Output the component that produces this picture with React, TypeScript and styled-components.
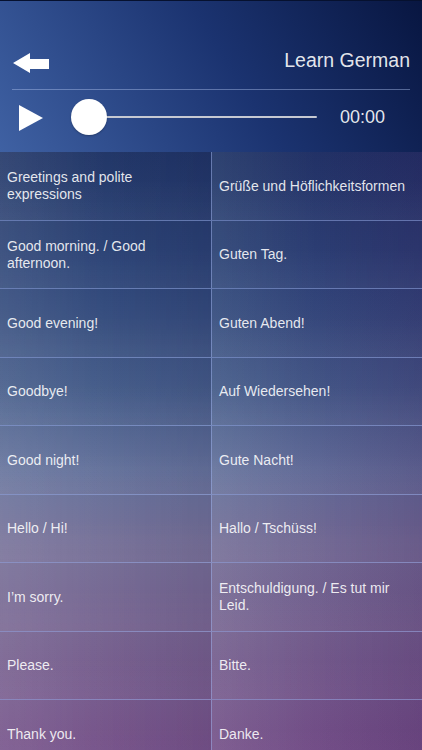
import React from 'react';
import styled, { createGlobalStyle } from 'styled-components';

const GlobalStyle = createGlobalStyle`
  html, body {
    margin: 0;
    padding: 0;
    background: #0b1a44;
    overflow: hidden;
  }
  * {
    box-sizing: border-box;
  }
`;

const phrases: [string, string][] = [
  ['Greetings and polite expressions', 'Grüße und Höflichkeitsformen'],
  ['Good morning. / Good afternoon.', 'Guten Tag.'],
  ['Good evening!', 'Guten Abend!'],
  ['Goodbye!', 'Auf Wiedersehen!'],
  ['Good night!', 'Gute Nacht!'],
  ['Hello / Hi!', 'Hallo / Tschüss!'],
  ['I’m sorry.', 'Entschuldigung. / Es tut mir Leid.'],
  ['Please.', 'Bitte.'],
  ['Thank you.', 'Danke.'],
];

function App(): React.ReactElement {
  return (
    <>
      <GlobalStyle />
      <Screen>
        <Header>
          <TopRow>
            <BackButton aria-label="back">
              <svg width="36" height="20" viewBox="0 0 36 20">
                <path d="M0 10 L17 0 L17 6 L36 6 L36 16 L17 16 L17 20 Z" fill="#fff" />
              </svg>
            </BackButton>
            <Title>Learn German</Title>
          </TopRow>
          <Divider />
          <ControlRow>
            <PlayButton aria-label="play">
              <svg width="24" height="26" viewBox="0 0 24 26">
                <path d="M0 0 L24 13 L0 26 Z" fill="#fff" />
              </svg>
            </PlayButton>
            <Slider>
              <Track />
              <Thumb />
            </Slider>
            <Time>00:00</Time>
          </ControlRow>
        </Header>
        <Table>
          {phrases.map(([en, de]) => (
            <Row key={en}>
              <Cell first>{en}</Cell>
              <Cell>{de}</Cell>
            </Row>
          ))}
        </Table>
      </Screen>
    </>
  );
}

export default App;

const Screen = styled.div`
  width: 422px;
  height: 750px;
  overflow: hidden;
  display: flex;
  flex-direction: column;
  font-family: "Liberation Sans", Arial, sans-serif;
  color: #fff;
`;

const Header = styled.div`
  flex: none;
  height: 152px;
  padding: 39px 12px 8px;
  display: flex;
  flex-direction: column;
  border-top: 1px solid #06112f;
  background: linear-gradient(238deg, #081641 0%, #1b3370 45%, #3f61a3 100%);
`;

const TopRow = styled.div`
  height: 44px;
  display: flex;
  align-items: center;
  justify-content: space-between;
`;

const BackButton = styled.div`
  display: flex;
  align-items: center;
  padding-left: 1px;
  margin-top: 1px;
`;

const Title = styled.div`
  font-size: 19.5px;
  color: rgba(255, 255, 255, 0.9);
  margin-top: -4px;
`;

const Divider = styled.div`
  height: 1px;
  margin-top: 5px;
  background: rgba(170, 190, 235, 0.45);
`;

const ControlRow = styled.div`
  height: 54px;
  display: flex;
  align-items: center;
  padding-left: 7px;
`;

const PlayButton = styled.div`
  width: 24px;
  display: flex;
  align-items: center;
  margin-top: 1px;
`;

const Slider = styled.div`
  position: relative;
  flex: 1;
  height: 36px;
  margin-left: 28px;
  display: flex;
  align-items: center;
`;

const Track = styled.div`
  flex: 1;
  height: 2px;
  margin-left: 18px;
  border-radius: 1px;
  background: #c6c9d2;
`;

const Thumb = styled.div`
  position: absolute;
  left: 0;
  top: 0;
  width: 36px;
  height: 36px;
  border-radius: 50%;
  background: #fff;
  box-shadow: 0 1px 2px rgba(0, 0, 0, 0.25);
`;

const Time = styled.div`
  width: 46px;
  margin-left: 23px;
  margin-right: 24px;
  font-size: 18px;
  color: rgba(255, 255, 255, 0.9);
  white-space: nowrap;
`;

const Table = styled.div`
  flex: 1;
  overflow: hidden;
  background:
    linear-gradient(to right, rgba(255, 255, 255, 0.03) 0%, rgba(255, 255, 255, 0) 50%, rgba(70, 10, 100, 0.14) 100%),
    linear-gradient(
      to bottom,
      #1f3466 0%,
      #2d4578 22%,
      #445b89 40%,
      #62709a 53%,
      #746f97 65%,
      #75628f 80%,
      #745088 100%
    );
`;

const Row = styled.div`
  flex: none;
  display: grid;
  grid-template-columns: 212px 1fr;
  height: 68.5px;
  border-bottom: 1px solid rgba(155, 175, 235, 0.5);
`;

const Cell = styled.div<{ first?: boolean }>`
  display: flex;
  align-items: center;
  padding: 1px 14px 0 7px;
  font-size: 14px;
  line-height: 17px;
  color: rgba(255, 255, 255, 0.88);
  border-right: ${(p) => (p.first ? '1px solid rgba(155, 175, 235, 0.5)' : 'none')};
  background:
    linear-gradient(to right, rgba(255, 255, 255, 0.07), rgba(255, 255, 255, 0) 50%, rgba(20, 0, 40, 0.08)),
    linear-gradient(to top, rgba(255, 255, 255, 0.03), rgba(255, 255, 255, 0) 60%);
`;
